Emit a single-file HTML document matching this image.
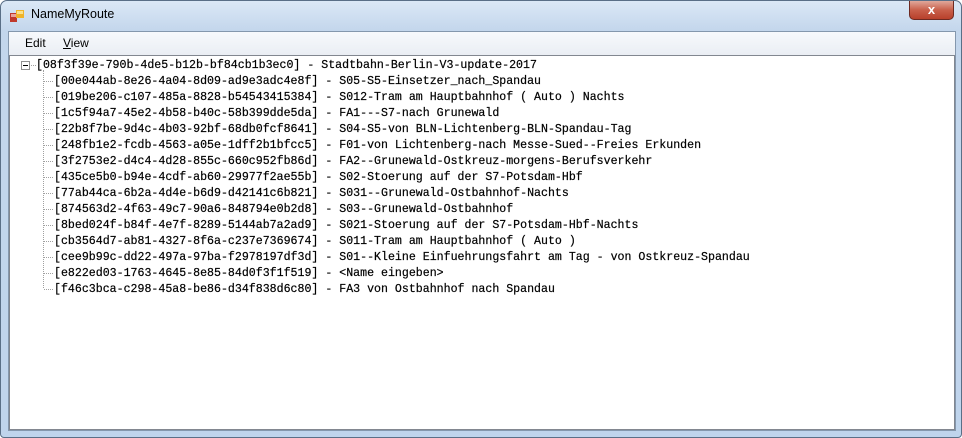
<!DOCTYPE html>
<html><head><style>
*{margin:0;padding:0;box-sizing:border-box}
body{width:962px;height:438px;overflow:hidden;background:#fff;font-family:"Segoe UI","Liberation Sans",sans-serif}
.win{position:absolute;left:0;top:0;width:962px;height:438px;border:1px solid #5a6f87;border-radius:7px 7px 4px 4px;background:linear-gradient(#dbe8f6,#c3d6ec 30px,#bfd4ec);}
.title{position:absolute;left:30px;top:6px;font-size:12.5px;color:#000}
.icon{position:absolute;left:9px;top:9px;width:14px;height:12px}
.close{position:absolute;left:908px;top:0;width:45px;height:19px;border:1px solid #6d2a22;border-top:none;border-radius:0 0 5px 5px;background:linear-gradient(#e0a89b,#c9604b 50%,#b8402b);color:#fff;font:bold 13px "Liberation Sans",sans-serif;text-align:center;line-height:17px}
.client{position:absolute;left:7px;top:30px;width:948px;height:400px;border:1px solid #8497ad;background:#f0f0f0}
.menu{position:absolute;left:0;top:0;width:946px;height:23px;background:linear-gradient(#f7f9fc,#eaeef4);font-size:12px}
.menu span{position:absolute;top:4px}
.tree{position:absolute;left:0;top:23px;width:946px;height:375px;background:#fff;border:1px solid #828790}
.row{position:absolute;font:11.6px "Liberation Mono","Courier New",monospace;color:#000;white-space:pre;line-height:14px;-webkit-text-stroke:0.2px #000}
.dots{position:absolute;border-left:1px dotted #a0a0a0}
.hd{position:absolute;height:0;border-top:1px dotted #a0a0a0}
.plus{position:absolute;left:11px;top:5px;width:9px;height:9px;border:1px solid #919191;background:#fff}
.plus:after{content:"";position:absolute;left:1px;top:3px;width:5px;height:1px;background:#000}
</style></head><body>
<div class="win">
<svg class="icon" viewBox="0 0 14 12"><rect x="0" y="3" width="7" height="9" fill="#c0392b"/><rect x="1" y="4" width="5" height="3" fill="#e9a39b"/><rect x="6" y="0" width="8" height="8" fill="#f0b429"/><rect x="7" y="1" width="6" height="3" fill="#fbe28a"/></svg>
<div class="title">NameMyRoute</div>
<div class="close">x</div>
<div class="client">
<div class="menu"><span style="left:16px">Edit</span><span style="left:54px"><u>V</u>iew</span></div>
<div class="tree">
<div class="plus"></div>
<div class="hd" style="left:21px;top:9px;width:5px"></div>
<div class="dots" style="left:33px;top:14px;height:218px"></div>
<div class="row" style="left:26px;top:3px">[08f3f39e-790b-4de5-b12b-bf84cb1b3ec0] - Stadtbahn-Berlin-V3-update-2017</div>
<div class="hd" style="left:34px;top:25px;width:9px"></div>
<div class="row" style="left:44px;top:19px">[00e044ab-8e26-4a04-8d09-ad9e3adc4e8f] - S05-S5-Einsetzer_nach_Spandau</div>
<div class="hd" style="left:34px;top:41px;width:9px"></div>
<div class="row" style="left:44px;top:35px">[019be206-c107-485a-8828-b54543415384] - S012-Tram am Hauptbahnhof ( Auto ) Nachts</div>
<div class="hd" style="left:34px;top:57px;width:9px"></div>
<div class="row" style="left:44px;top:51px">[1c5f94a7-45e2-4b58-b40c-58b399dde5da] - FA1---S7-nach Grunewald</div>
<div class="hd" style="left:34px;top:73px;width:9px"></div>
<div class="row" style="left:44px;top:67px">[22b8f7be-9d4c-4b03-92bf-68db0fcf8641] - S04-S5-von BLN-Lichtenberg-BLN-Spandau-Tag</div>
<div class="hd" style="left:34px;top:89px;width:9px"></div>
<div class="row" style="left:44px;top:83px">[248fb1e2-fcdb-4563-a05e-1dff2b1bfcc5] - F01-von Lichtenberg-nach Messe-Sued--Freies Erkunden</div>
<div class="hd" style="left:34px;top:105px;width:9px"></div>
<div class="row" style="left:44px;top:99px">[3f2753e2-d4c4-4d28-855c-660c952fb86d] - FA2--Grunewald-Ostkreuz-morgens-Berufsverkehr</div>
<div class="hd" style="left:34px;top:121px;width:9px"></div>
<div class="row" style="left:44px;top:115px">[435ce5b0-b94e-4cdf-ab60-29977f2ae55b] - S02-Stoerung auf der S7-Potsdam-Hbf</div>
<div class="hd" style="left:34px;top:137px;width:9px"></div>
<div class="row" style="left:44px;top:131px">[77ab44ca-6b2a-4d4e-b6d9-d42141c6b821] - S031--Grunewald-Ostbahnhof-Nachts</div>
<div class="hd" style="left:34px;top:153px;width:9px"></div>
<div class="row" style="left:44px;top:147px">[874563d2-4f63-49c7-90a6-848794e0b2d8] - S03--Grunewald-Ostbahnhof</div>
<div class="hd" style="left:34px;top:169px;width:9px"></div>
<div class="row" style="left:44px;top:163px">[8bed024f-b84f-4e7f-8289-5144ab7a2ad9] - S021-Stoerung auf der S7-Potsdam-Hbf-Nachts</div>
<div class="hd" style="left:34px;top:185px;width:9px"></div>
<div class="row" style="left:44px;top:179px">[cb3564d7-ab81-4327-8f6a-c237e7369674] - S011-Tram am Hauptbahnhof ( Auto )</div>
<div class="hd" style="left:34px;top:201px;width:9px"></div>
<div class="row" style="left:44px;top:195px">[cee9b99c-dd22-497a-97ba-f2978197df3d] - S01--Kleine Einfuehrungsfahrt am Tag - von Ostkreuz-Spandau</div>
<div class="hd" style="left:34px;top:217px;width:9px"></div>
<div class="row" style="left:44px;top:211px">[e822ed03-1763-4645-8e85-84d0f3f1f519] - &lt;Name eingeben&gt;</div>
<div class="hd" style="left:34px;top:233px;width:9px"></div>
<div class="row" style="left:44px;top:227px">[f46c3bca-c298-45a8-be86-d34f838d6c80] - FA3 von Ostbahnhof nach Spandau</div>
</div>
</div>
</div>
</body></html>
